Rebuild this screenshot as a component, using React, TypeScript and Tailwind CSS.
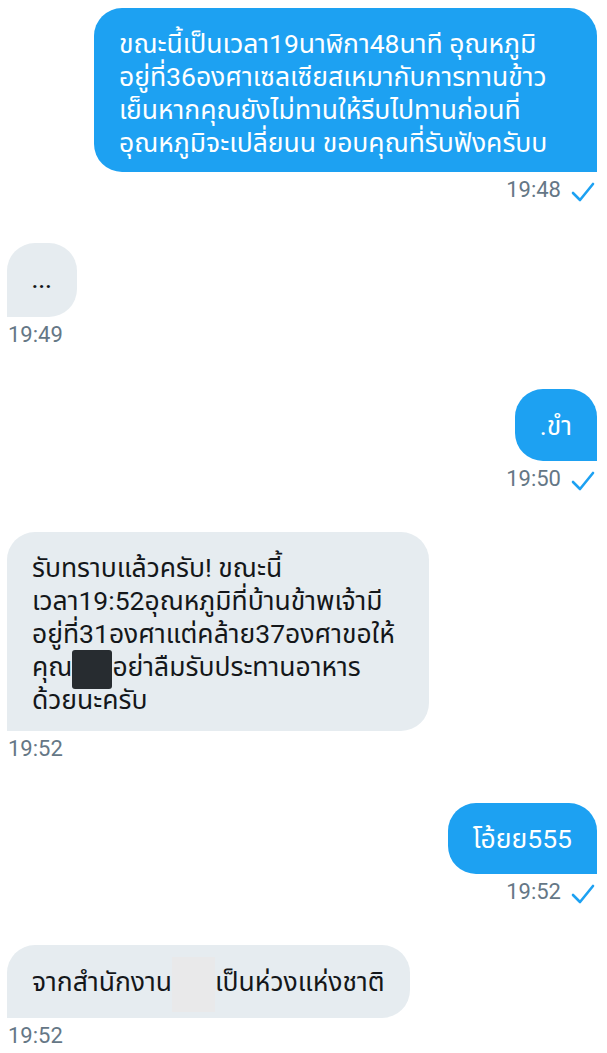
import React from 'react';

const font = { fontFamily: 'Roboto, "Noto Sans Thai", "Noto Sans", "DejaVu Sans", sans-serif' };

function Check() {
  return (
    <svg width="24" height="22" viewBox="0 0 24 22" className="ml-[10px] mt-[4px]">
      <polyline points="2,12 9,19 22,3" fill="none" stroke="#1da1f2" strokeWidth="2.6" strokeLinecap="round" strokeLinejoin="round" />
    </svg>
  );
}

function Sent({ children, time, className = '' }: { children: React.ReactNode; time: string; className?: string }) {
  return (
    <div className="flex flex-col items-end">
      <div className={`bg-[#1da1f2] text-white rounded-[28px] rounded-br-none px-[25px] text-[26.5px] leading-[33px] ${className}`}>
        {children}
      </div>
      <div className="flex items-start mt-[5px] pr-[2px]">
        <span className="text-[22px] leading-[26px] text-[#657786]">{time}</span>
        <Check />
      </div>
    </div>
  );
}

function Received({ children, time, className = '' }: { children: React.ReactNode; time: string; className?: string }) {
  return (
    <div className="flex flex-col items-start">
      <div className={`bg-[#e6ecf0] text-[#14171a] rounded-[28px] rounded-bl-none px-[25px] text-[26.5px] leading-[33px] ${className}`}>
        {children}
      </div>
      <div className="mt-[5px] pl-[1px]">
        <span className="text-[22px] leading-[26px] text-[#657786]">{time}</span>
      </div>
    </div>
  );
}

export default function App() {
  return (
    <div className="min-h-screen w-full bg-white pl-[7px] pr-[10px] pt-[8px]" style={font}>
      <div className="flex flex-col gap-[40px]">
        <Sent time="19:48" className="w-[503px] pt-[19px] pb-[13px] whitespace-nowrap">
          ขณะนี้เป็นเวลา19นาฬิกา48นาที อุณหภูมิ
          <br />
          อยู่ที่36องศาเซลเซียสเหมากับการทานข้าว
          <br />
          เย็นหากคุณยังไม่ทานให้รีบไปทานก่อนที่
          <br />
          อุณหภูมิจะเปลี่ยนน ขอบคุณที่รับฟังครับบ
        </Sent>

        <Received time="19:49" className="py-[19px] rounded-[22px] rounded-bl-none">
          <span className="text-[20px] font-bold tracking-[1px]">...</span>
        </Received>

        <Sent time="19:50" className="pt-[20px] pb-[19px] rounded-[24px] rounded-br-none">
          .ขำ
        </Sent>

        <Received time="19:52" className="w-[422px] pt-[19px] pb-[15px] whitespace-nowrap">
          รับทราบแล้วครับ! ขณะนี้
          <br />
          เวลา19:52อุณหภูมิที่บ้านข้าพเจ้ามี
          <br />
          อยู่ที่31องศาแต่คล้าย37องศาขอให้
          <br />
          คุณ
          <span className="inline-block align-middle w-[40px] h-[39px] -my-[6px] rounded-[3px] bg-[#272c30]" />
          อย่าลืมรับประทานอาหาร
          <br />
          ด้วยนะครับ
        </Received>

        <Sent time="19:52" className="py-[19px] rounded-[26px] rounded-br-none">
          โอ้ยย555
        </Sent>

        <Received time="19:52" className="pt-[20px] pb-[20px] whitespace-nowrap">
          จากสำนักงาน
          <span className="inline-block align-middle w-[43px] h-[55px] -my-[14px] bg-[#e9e9ea]" />
          เป็นห่วงแห่งชาติ
        </Received>
      </div>
    </div>
  );
}
